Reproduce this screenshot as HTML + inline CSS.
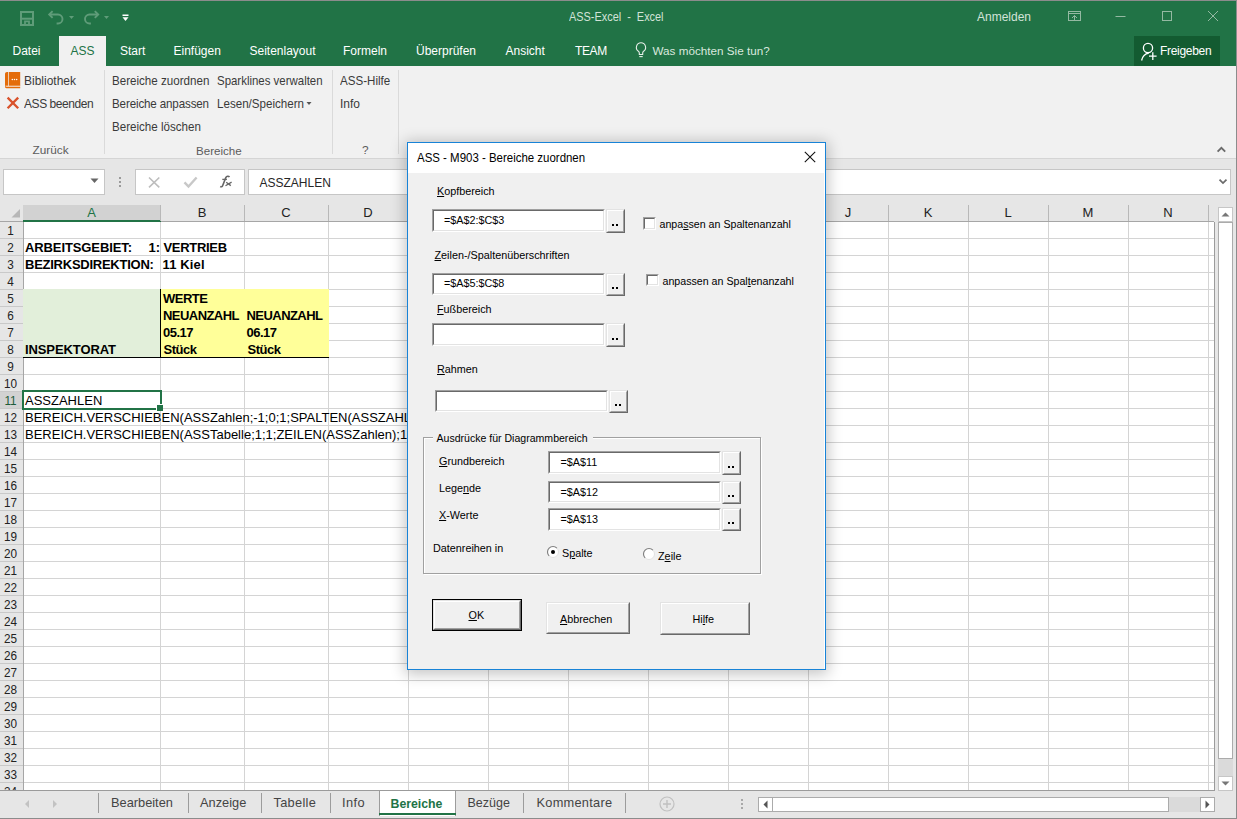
<!DOCTYPE html>
<html><head><meta charset="utf-8"><style>
html,body{margin:0;padding:0;}
body{width:1237px;height:819px;position:relative;overflow:hidden;font-family:"Liberation Sans", sans-serif;background:#e6e6e6}
body>div,body>svg{position:absolute}
.t{position:absolute;white-space:pre;line-height:1;font-family:"Liberation Sans", sans-serif}
u{text-decoration:underline;text-underline-offset:1px}
</style></head><body>
<div style="left:0px;top:0px;width:1237px;height:819px;background:#e6e6e6"></div>
<div style="left:0px;top:0px;width:1237px;height:66px;background:#217346"></div>
<div style="left:0px;top:0px;width:1237px;height:1px;background:#8c8c8c"></div>
<svg style="position:absolute;left:18px;top:9px;" width="20" height="18" viewBox="0 0 20 18"><path d="M3 3h12v13H3z" fill="none" stroke="#5f9c79" stroke-width="2"/><path d="M3 9.7h12" stroke="#5f9c79" stroke-width="2"/><path d="M7 16v-3.6h4V16" fill="none" stroke="#5f9c79" stroke-width="1.8"/></svg>
<svg style="position:absolute;left:47px;top:9px;" width="20" height="18" viewBox="0 0 20 18"><path d="M5.6 2.1L2.2 5.5l3.4 3.4" fill="none" stroke="#5f9c79" stroke-width="1.9"/><path d="M2.5 5.5h8.5a4.5 4.5 0 0 1 0 9H9.6" fill="none" stroke="#5f9c79" stroke-width="1.9"/></svg>
<svg style="position:absolute;left:68px;top:15px;" width="7" height="5" viewBox="0 0 7 5"><path d="M1 1h5l-2.5 3z" fill="#5f9c79"/></svg>
<svg style="position:absolute;left:82px;top:9px;" width="20" height="18" viewBox="0 0 20 18"><path d="M12.8 2.1l3.4 3.4-3.4 3.4" fill="none" stroke="#5f9c79" stroke-width="1.9"/><path d="M16 5.5H7.5a4.5 4.5 0 0 0 0 9h1.4" fill="none" stroke="#5f9c79" stroke-width="1.9"/></svg>
<svg style="position:absolute;left:103px;top:15px;" width="7" height="5" viewBox="0 0 7 5"><path d="M1 1h5l-2.5 3z" fill="#5f9c79"/></svg>
<svg style="position:absolute;left:121px;top:13px;" width="9" height="10" viewBox="0 0 9 10"><rect x="1.5" y="1.5" width="6" height="1.5" fill="#fff"/><path d="M1.5 4.3h6l-3 3.6z" fill="#fff"/></svg>
<div class="t" style="left:569.00px;top:10.50px;font-size:12.4px;color:#d3e3d8;font-weight:normal;;transform:scaleX(0.88);transform-origin:0 0">ASS-Excel&nbsp; -&nbsp; Excel</div>
<div class="t" style="left:977.00px;top:11.14px;font-size:12px;color:#d3e3d8;font-weight:normal;">Anmelden</div>
<svg style="position:absolute;left:1066px;top:9px;" width="18" height="14" viewBox="0 0 18 14"><rect x="2.5" y="2.5" width="12" height="9" fill="none" stroke="#94b9a2" stroke-width="1"/><path d="M2.5 4.5h12" stroke="#94b9a2"/><path d="M8.5 11.5v-5m-2.5 2.5l2.5-2.5 2.5 2.5" fill="none" stroke="#94b9a2"/></svg>
<svg style="position:absolute;left:1114px;top:9px;" width="14" height="14" viewBox="0 0 14 14"><path d="M1.5 7.5h10" stroke="#94b9a2"/></svg>
<svg style="position:absolute;left:1160px;top:9px;" width="14" height="14" viewBox="0 0 14 14"><rect x="2.5" y="2.5" width="9" height="9" fill="none" stroke="#94b9a2"/></svg>
<svg style="position:absolute;left:1206px;top:9px;" width="14" height="14" viewBox="0 0 14 14"><path d="M2 2l10 10m0-10L2 12" stroke="#94b9a2" stroke-width="1"/></svg>
<div style="left:59px;top:36px;width:47px;height:30px;background:#f1f1f1"></div>
<div class="t" style="left:12.50px;top:44.84px;font-size:12px;color:#fff;font-weight:normal;">Datei</div>
<div class="t" style="left:70.50px;top:44.84px;font-size:12px;color:#217346;font-weight:normal;">ASS</div>
<div class="t" style="left:120.00px;top:44.84px;font-size:12px;color:#fff;font-weight:normal;">Start</div>
<div class="t" style="left:173.50px;top:44.84px;font-size:12px;color:#fff;font-weight:normal;">Einfügen</div>
<div class="t" style="left:249.50px;top:44.84px;font-size:12px;color:#fff;font-weight:normal;">Seitenlayout</div>
<div class="t" style="left:343.00px;top:44.84px;font-size:12px;color:#fff;font-weight:normal;">Formeln</div>
<div class="t" style="left:416.00px;top:44.84px;font-size:12px;color:#fff;font-weight:normal;">Überprüfen</div>
<div class="t" style="left:505.50px;top:44.84px;font-size:12px;color:#fff;font-weight:normal;">Ansicht</div>
<div class="t" style="left:575.00px;top:44.84px;font-size:12px;color:#fff;font-weight:normal;letter-spacing:-0.4px">TEAM</div>
<svg style="position:absolute;left:634px;top:41px;" width="14" height="18" viewBox="0 0 14 18"><path d="M7 1.8a4.6 4.6 0 0 0-2.6 8.4c.6.5.9 1.2.9 1.9v1.4h3.4v-1.4c0-.7.3-1.4.9-1.9A4.6 4.6 0 0 0 7 1.8z" fill="none" stroke="#e8f0ea" stroke-width="1.1"/><path d="M5.3 15.6h3.4" stroke="#e8f0ea" stroke-width="1.1"/></svg>
<div class="t" style="left:652.50px;top:45.10px;font-size:11.7px;color:#d9e8de;font-weight:normal;">Was möchten Sie tun?</div>
<div style="left:1134px;top:36px;width:86px;height:30px;background:#135b31"></div>
<svg style="position:absolute;left:1138px;top:40px;" width="22" height="24" viewBox="0 0 22 24"><circle cx="10" cy="8" r="4.6" fill="none" stroke="#fff" stroke-width="1.3"/><path d="M3.6 20.5c.8-3.8 3.4-6.7 7.2-7.3" fill="none" stroke="#fff" stroke-width="1.3"/><path d="M14.8 12.3v7.6M11 16.1h7.6" stroke="#fff" stroke-width="1.3"/></svg>
<div class="t" style="left:1160.00px;top:44.54px;font-size:12px;color:#fff;font-weight:normal;letter-spacing:-0.3px">Freigeben</div>
<div style="left:1236px;top:0px;width:1px;height:819px;background:#8c8c8c"></div>
<div style="left:0px;top:66px;width:1236px;height:92px;background:#f1f1f1"></div>
<div style="left:0px;top:158px;width:1236px;height:1px;background:#d5d5d5"></div>
<div style="left:104px;top:70px;width:1px;height:84px;background:#dadada"></div>
<div style="left:332px;top:70px;width:1px;height:84px;background:#dadada"></div>
<div style="left:398px;top:70px;width:1px;height:84px;background:#dadada"></div>
<svg style="position:absolute;left:4px;top:71px;" width="18" height="19" viewBox="0 0 18 19"><path d="M1 3.2c0-1.3.8-2.2 2-2.2h1.2v14H1z" fill="#e46c0a"/><rect x="4.9" y="1" width="11.3" height="14" fill="#e46c0a"/><path d="M1 14.6v1.2c0 .9.6 1.4 1.4 1.4h13.8v-1.6H2.7" fill="#e46c0a"/><path d="M1.4 15.1h14.8" stroke="#fff" stroke-width=".6"/><circle cx="8.3" cy="8.6" r=".75" fill="#fff"/><circle cx="10.5" cy="8.6" r=".75" fill="#fff"/><circle cx="12.7" cy="8.6" r=".75" fill="#fff"/></svg>
<svg style="position:absolute;left:5px;top:95px;" width="16" height="16" viewBox="0 0 16 16"><path d="M2.6 2.6l10.6 10.6m0-10.6L2.6 13.2" stroke="#d9522b" stroke-width="2.3"/></svg>
<div class="t" style="left:23.50px;top:75.03px;font-size:12.6px;color:#3a3a3a;font-weight:normal;;transform:scaleX(0.9524);transform-origin:0 0">Bibliothek</div>
<div class="t" style="left:23.50px;top:98.23px;font-size:12.6px;color:#3a3a3a;font-weight:normal;letter-spacing:-0.45px;transform:scaleX(0.9524);transform-origin:0 0">ASS beenden</div>
<div class="t" style="left:112.00px;top:75.03px;font-size:12.6px;color:#3a3a3a;font-weight:normal;;transform:scaleX(0.9206);transform-origin:0 0">Bereiche zuordnen</div>
<div class="t" style="left:112.00px;top:98.23px;font-size:12.6px;color:#3a3a3a;font-weight:normal;letter-spacing:-0.15px;transform:scaleX(0.9206);transform-origin:0 0">Bereiche anpassen</div>
<div class="t" style="left:112.00px;top:121.23px;font-size:12.6px;color:#3a3a3a;font-weight:normal;;transform:scaleX(0.9206);transform-origin:0 0">Bereiche löschen</div>
<div class="t" style="left:217.00px;top:75.03px;font-size:12.6px;color:#3a3a3a;font-weight:normal;;transform:scaleX(0.9087);transform-origin:0 0">Sparklines verwalten</div>
<div class="t" style="left:217.00px;top:98.23px;font-size:12.6px;color:#3a3a3a;font-weight:normal;;transform:scaleX(0.9206);transform-origin:0 0">Lesen/Speichern</div>
<svg style="position:absolute;left:306px;top:101px;" width="6" height="5" viewBox="0 0 6 5"><path d="M.5 1h5l-2.5 3z" fill="#555"/></svg>
<div class="t" style="left:339.50px;top:75.03px;font-size:12.6px;color:#3a3a3a;font-weight:normal;;transform:scaleX(0.9206);transform-origin:0 0">ASS-Hilfe</div>
<div class="t" style="left:339.50px;top:98.23px;font-size:12.6px;color:#3a3a3a;font-weight:normal;;transform:scaleX(0.9524);transform-origin:0 0">Info</div>
<div class="t" style="left:32.50px;top:144.51px;font-size:11.8px;color:#5c5c5c;font-weight:normal;">Zurück</div>
<div class="t" style="left:196.00px;top:144.68px;font-size:11.6px;color:#5c5c5c;font-weight:normal;">Bereiche</div>
<div class="t" style="left:362.00px;top:144.51px;font-size:11.8px;color:#5c5c5c;font-weight:normal;">?</div>
<svg style="position:absolute;left:1214px;top:143px;" width="14" height="12" viewBox="0 0 14 12"><path d="M3.6 8.6l3.8-3.8 3.8 3.8" fill="none" stroke="#6b6b6b" stroke-width="1.9"/></svg>
<div style="left:3px;top:169px;width:102px;height:26px;background:#fff;border:1px solid #c6c6c6;box-sizing:border-box"></div>
<svg style="position:absolute;left:89px;top:177px;" width="11" height="7" viewBox="0 0 11 7"><path d="M1.5 1.5h8l-4 4.5z" fill="#666"/></svg>
<div style="left:119px;top:177px;width:2px;height:2px;background:#9a9a9a"></div>
<div style="left:119px;top:181px;width:2px;height:2px;background:#9a9a9a"></div>
<div style="left:119px;top:185px;width:2px;height:2px;background:#9a9a9a"></div>
<div style="left:135px;top:169px;width:110px;height:26px;background:#fff;border:1px solid #c6c6c6;box-sizing:border-box"></div>
<svg style="position:absolute;left:147px;top:176px;" width="14" height="12" viewBox="0 0 14 12"><path d="M2 1.5l10.3 9.8M12.3 1.5L2 11.3" stroke="#bdbdbd" stroke-width="1.6"/></svg>
<svg style="position:absolute;left:183px;top:176px;" width="15" height="13" viewBox="0 0 15 13"><path d="M1.5 6.3l4 4.2L13.6 1.5" fill="none" stroke="#c8c8c8" stroke-width="2.4"/></svg>
<svg style="position:absolute;left:218px;top:174px;" width="16" height="16" viewBox="0 0 16 16"><path d="M11.4 3.2C10.8 1.9 8.6 1.8 7.8 3.6L4.6 11.8C4.2 12.8 3.2 13.1 2.2 12.5" fill="none" stroke="#666" stroke-width="1.6"/><path d="M4.3 5.4h4.6" stroke="#666" stroke-width="1.3"/><path d="M8.2 8.3l4.6 3.3M13.6 8.1l-6.1 3.6" stroke="#666" stroke-width="1.3"/></svg>
<div style="left:248px;top:169px;width:983px;height:26px;background:#fff;border:1px solid #c6c6c6;box-sizing:border-box"></div>
<div class="t" style="left:259.50px;top:176.74px;font-size:12px;color:#262626;font-weight:normal;">ASSZAHLEN</div>
<svg style="position:absolute;left:1217px;top:176px;" width="12" height="10" viewBox="0 0 12 10"><path d="M2.5 3.6l3.5 3.5 3.5-3.5" fill="none" stroke="#6b6b6b" stroke-width="1.7"/></svg>
<div style="left:24px;top:222px;width:1190px;height:568px;background:#fff"></div>
<div style="left:0px;top:205px;width:1214px;height:17px;background:#e6e6e6"></div>
<svg style="position:absolute;left:6px;top:207px;" width="16" height="14" viewBox="0 0 16 14"><path d="M14 2v8.5H5.5z" fill="#b7b7b7"/></svg>
<div style="left:0px;top:222px;width:23px;height:568px;background:#e6e6e6"></div>
<div style="left:160px;top:222px;width:1px;height:568px;background:#d4d4d4"></div>
<div style="left:244px;top:222px;width:1px;height:568px;background:#d4d4d4"></div>
<div style="left:328px;top:222px;width:1px;height:568px;background:#d4d4d4"></div>
<div style="left:408px;top:222px;width:1px;height:568px;background:#d4d4d4"></div>
<div style="left:488px;top:222px;width:1px;height:568px;background:#d4d4d4"></div>
<div style="left:568px;top:222px;width:1px;height:568px;background:#d4d4d4"></div>
<div style="left:648px;top:222px;width:1px;height:568px;background:#d4d4d4"></div>
<div style="left:728px;top:222px;width:1px;height:568px;background:#d4d4d4"></div>
<div style="left:808px;top:222px;width:1px;height:568px;background:#d4d4d4"></div>
<div style="left:888px;top:222px;width:1px;height:568px;background:#d4d4d4"></div>
<div style="left:968px;top:222px;width:1px;height:568px;background:#d4d4d4"></div>
<div style="left:1048px;top:222px;width:1px;height:568px;background:#d4d4d4"></div>
<div style="left:1128px;top:222px;width:1px;height:568px;background:#d4d4d4"></div>
<div style="left:1208px;top:222px;width:1px;height:568px;background:#d4d4d4"></div>
<div style="left:23px;top:238px;width:1191px;height:1px;background:#d4d4d4"></div>
<div style="left:23px;top:255px;width:1191px;height:1px;background:#d4d4d4"></div>
<div style="left:23px;top:272px;width:1191px;height:1px;background:#d4d4d4"></div>
<div style="left:23px;top:289px;width:1191px;height:1px;background:#d4d4d4"></div>
<div style="left:23px;top:306px;width:1191px;height:1px;background:#d4d4d4"></div>
<div style="left:23px;top:323px;width:1191px;height:1px;background:#d4d4d4"></div>
<div style="left:23px;top:340px;width:1191px;height:1px;background:#d4d4d4"></div>
<div style="left:23px;top:357px;width:1191px;height:1px;background:#d4d4d4"></div>
<div style="left:23px;top:374px;width:1191px;height:1px;background:#d4d4d4"></div>
<div style="left:23px;top:391px;width:1191px;height:1px;background:#d4d4d4"></div>
<div style="left:23px;top:408px;width:1191px;height:1px;background:#d4d4d4"></div>
<div style="left:23px;top:425px;width:1191px;height:1px;background:#d4d4d4"></div>
<div style="left:23px;top:442px;width:1191px;height:1px;background:#d4d4d4"></div>
<div style="left:23px;top:459px;width:1191px;height:1px;background:#d4d4d4"></div>
<div style="left:23px;top:476px;width:1191px;height:1px;background:#d4d4d4"></div>
<div style="left:23px;top:493px;width:1191px;height:1px;background:#d4d4d4"></div>
<div style="left:23px;top:510px;width:1191px;height:1px;background:#d4d4d4"></div>
<div style="left:23px;top:527px;width:1191px;height:1px;background:#d4d4d4"></div>
<div style="left:23px;top:544px;width:1191px;height:1px;background:#d4d4d4"></div>
<div style="left:23px;top:561px;width:1191px;height:1px;background:#d4d4d4"></div>
<div style="left:23px;top:578px;width:1191px;height:1px;background:#d4d4d4"></div>
<div style="left:23px;top:595px;width:1191px;height:1px;background:#d4d4d4"></div>
<div style="left:23px;top:612px;width:1191px;height:1px;background:#d4d4d4"></div>
<div style="left:23px;top:629px;width:1191px;height:1px;background:#d4d4d4"></div>
<div style="left:23px;top:646px;width:1191px;height:1px;background:#d4d4d4"></div>
<div style="left:23px;top:663px;width:1191px;height:1px;background:#d4d4d4"></div>
<div style="left:23px;top:680px;width:1191px;height:1px;background:#d4d4d4"></div>
<div style="left:23px;top:697px;width:1191px;height:1px;background:#d4d4d4"></div>
<div style="left:23px;top:714px;width:1191px;height:1px;background:#d4d4d4"></div>
<div style="left:23px;top:731px;width:1191px;height:1px;background:#d4d4d4"></div>
<div style="left:23px;top:748px;width:1191px;height:1px;background:#d4d4d4"></div>
<div style="left:23px;top:765px;width:1191px;height:1px;background:#d4d4d4"></div>
<div style="left:23px;top:782px;width:1191px;height:1px;background:#d4d4d4"></div>
<div style="left:0px;top:238px;width:23px;height:1px;background:#c9c9c9"></div>
<div style="left:0px;top:255px;width:23px;height:1px;background:#c9c9c9"></div>
<div style="left:0px;top:272px;width:23px;height:1px;background:#c9c9c9"></div>
<div style="left:0px;top:289px;width:23px;height:1px;background:#c9c9c9"></div>
<div style="left:0px;top:306px;width:23px;height:1px;background:#c9c9c9"></div>
<div style="left:0px;top:323px;width:23px;height:1px;background:#c9c9c9"></div>
<div style="left:0px;top:340px;width:23px;height:1px;background:#c9c9c9"></div>
<div style="left:0px;top:357px;width:23px;height:1px;background:#c9c9c9"></div>
<div style="left:0px;top:374px;width:23px;height:1px;background:#c9c9c9"></div>
<div style="left:0px;top:391px;width:23px;height:1px;background:#c9c9c9"></div>
<div style="left:0px;top:408px;width:23px;height:1px;background:#c9c9c9"></div>
<div style="left:0px;top:425px;width:23px;height:1px;background:#c9c9c9"></div>
<div style="left:0px;top:442px;width:23px;height:1px;background:#c9c9c9"></div>
<div style="left:0px;top:459px;width:23px;height:1px;background:#c9c9c9"></div>
<div style="left:0px;top:476px;width:23px;height:1px;background:#c9c9c9"></div>
<div style="left:0px;top:493px;width:23px;height:1px;background:#c9c9c9"></div>
<div style="left:0px;top:510px;width:23px;height:1px;background:#c9c9c9"></div>
<div style="left:0px;top:527px;width:23px;height:1px;background:#c9c9c9"></div>
<div style="left:0px;top:544px;width:23px;height:1px;background:#c9c9c9"></div>
<div style="left:0px;top:561px;width:23px;height:1px;background:#c9c9c9"></div>
<div style="left:0px;top:578px;width:23px;height:1px;background:#c9c9c9"></div>
<div style="left:0px;top:595px;width:23px;height:1px;background:#c9c9c9"></div>
<div style="left:0px;top:612px;width:23px;height:1px;background:#c9c9c9"></div>
<div style="left:0px;top:629px;width:23px;height:1px;background:#c9c9c9"></div>
<div style="left:0px;top:646px;width:23px;height:1px;background:#c9c9c9"></div>
<div style="left:0px;top:663px;width:23px;height:1px;background:#c9c9c9"></div>
<div style="left:0px;top:680px;width:23px;height:1px;background:#c9c9c9"></div>
<div style="left:0px;top:697px;width:23px;height:1px;background:#c9c9c9"></div>
<div style="left:0px;top:714px;width:23px;height:1px;background:#c9c9c9"></div>
<div style="left:0px;top:731px;width:23px;height:1px;background:#c9c9c9"></div>
<div style="left:0px;top:748px;width:23px;height:1px;background:#c9c9c9"></div>
<div style="left:0px;top:765px;width:23px;height:1px;background:#c9c9c9"></div>
<div style="left:0px;top:782px;width:23px;height:1px;background:#c9c9c9"></div>
<div style="left:23px;top:222px;width:1px;height:568px;background:#a6a6a6"></div>
<div style="left:0px;top:221px;width:1214px;height:1px;background:#a6a6a6"></div>
<div style="left:23px;top:205px;width:137px;height:15px;background:#d2d2d2"></div>
<div style="left:23px;top:220px;width:138px;height:2px;background:#217346"></div>
<div style="left:160px;top:205px;width:1px;height:16px;background:#b8b8b8"></div>
<div class="t" style="left:23px;width:137px;text-align:center;top:205.4px;font-size:13px;line-height:16px;color:#217346">A</div>
<div style="left:244px;top:205px;width:1px;height:16px;background:#b8b8b8"></div>
<div class="t" style="left:160px;width:84px;text-align:center;top:205.4px;font-size:13px;line-height:16px;color:#222">B</div>
<div style="left:328px;top:205px;width:1px;height:16px;background:#b8b8b8"></div>
<div class="t" style="left:244px;width:84px;text-align:center;top:205.4px;font-size:13px;line-height:16px;color:#222">C</div>
<div style="left:408px;top:205px;width:1px;height:16px;background:#b8b8b8"></div>
<div class="t" style="left:328px;width:80px;text-align:center;top:205.4px;font-size:13px;line-height:16px;color:#222">D</div>
<div style="left:488px;top:205px;width:1px;height:16px;background:#b8b8b8"></div>
<div class="t" style="left:408px;width:80px;text-align:center;top:205.4px;font-size:13px;line-height:16px;color:#222">E</div>
<div style="left:568px;top:205px;width:1px;height:16px;background:#b8b8b8"></div>
<div class="t" style="left:488px;width:80px;text-align:center;top:205.4px;font-size:13px;line-height:16px;color:#222">F</div>
<div style="left:648px;top:205px;width:1px;height:16px;background:#b8b8b8"></div>
<div class="t" style="left:568px;width:80px;text-align:center;top:205.4px;font-size:13px;line-height:16px;color:#222">G</div>
<div style="left:728px;top:205px;width:1px;height:16px;background:#b8b8b8"></div>
<div class="t" style="left:648px;width:80px;text-align:center;top:205.4px;font-size:13px;line-height:16px;color:#222">H</div>
<div style="left:808px;top:205px;width:1px;height:16px;background:#b8b8b8"></div>
<div class="t" style="left:728px;width:80px;text-align:center;top:205.4px;font-size:13px;line-height:16px;color:#222">I</div>
<div style="left:888px;top:205px;width:1px;height:16px;background:#b8b8b8"></div>
<div class="t" style="left:808px;width:80px;text-align:center;top:205.4px;font-size:13px;line-height:16px;color:#222">J</div>
<div style="left:968px;top:205px;width:1px;height:16px;background:#b8b8b8"></div>
<div class="t" style="left:888px;width:80px;text-align:center;top:205.4px;font-size:13px;line-height:16px;color:#222">K</div>
<div style="left:1048px;top:205px;width:1px;height:16px;background:#b8b8b8"></div>
<div class="t" style="left:968px;width:80px;text-align:center;top:205.4px;font-size:13px;line-height:16px;color:#222">L</div>
<div style="left:1128px;top:205px;width:1px;height:16px;background:#b8b8b8"></div>
<div class="t" style="left:1048px;width:80px;text-align:center;top:205.4px;font-size:13px;line-height:16px;color:#222">M</div>
<div style="left:1208px;top:205px;width:1px;height:16px;background:#b8b8b8"></div>
<div class="t" style="left:1128px;width:80px;text-align:center;top:205.4px;font-size:13px;line-height:16px;color:#222">N</div>
<div class="t" style="left:0px;width:21px;text-align:center;top:222.8px;font-size:13.5px;line-height:16px;color:#222;transform:scaleX(0.87)">1</div>
<div class="t" style="left:0px;width:21px;text-align:center;top:239.8px;font-size:13.5px;line-height:16px;color:#222;transform:scaleX(0.87)">2</div>
<div class="t" style="left:0px;width:21px;text-align:center;top:256.8px;font-size:13.5px;line-height:16px;color:#222;transform:scaleX(0.87)">3</div>
<div class="t" style="left:0px;width:21px;text-align:center;top:273.8px;font-size:13.5px;line-height:16px;color:#222;transform:scaleX(0.87)">4</div>
<div class="t" style="left:0px;width:21px;text-align:center;top:290.8px;font-size:13.5px;line-height:16px;color:#222;transform:scaleX(0.87)">5</div>
<div class="t" style="left:0px;width:21px;text-align:center;top:307.8px;font-size:13.5px;line-height:16px;color:#222;transform:scaleX(0.87)">6</div>
<div class="t" style="left:0px;width:21px;text-align:center;top:324.8px;font-size:13.5px;line-height:16px;color:#222;transform:scaleX(0.87)">7</div>
<div class="t" style="left:0px;width:21px;text-align:center;top:341.8px;font-size:13.5px;line-height:16px;color:#222;transform:scaleX(0.87)">8</div>
<div class="t" style="left:0px;width:21px;text-align:center;top:358.8px;font-size:13.5px;line-height:16px;color:#222;transform:scaleX(0.87)">9</div>
<div class="t" style="left:0px;width:21px;text-align:center;top:375.8px;font-size:13.5px;line-height:16px;color:#222;transform:scaleX(0.87)">10</div>
<div style="left:0px;top:392px;width:23px;height:16px;background:#d2d2d2"></div>
<div class="t" style="left:0px;width:21px;text-align:center;top:392.8px;font-size:13.5px;line-height:16px;color:#1d5c38;transform:scaleX(0.87)">11</div>
<div class="t" style="left:0px;width:21px;text-align:center;top:409.8px;font-size:13.5px;line-height:16px;color:#222;transform:scaleX(0.87)">12</div>
<div class="t" style="left:0px;width:21px;text-align:center;top:426.8px;font-size:13.5px;line-height:16px;color:#222;transform:scaleX(0.87)">13</div>
<div class="t" style="left:0px;width:21px;text-align:center;top:443.8px;font-size:13.5px;line-height:16px;color:#222;transform:scaleX(0.87)">14</div>
<div class="t" style="left:0px;width:21px;text-align:center;top:460.8px;font-size:13.5px;line-height:16px;color:#222;transform:scaleX(0.87)">15</div>
<div class="t" style="left:0px;width:21px;text-align:center;top:477.8px;font-size:13.5px;line-height:16px;color:#222;transform:scaleX(0.87)">16</div>
<div class="t" style="left:0px;width:21px;text-align:center;top:494.8px;font-size:13.5px;line-height:16px;color:#222;transform:scaleX(0.87)">17</div>
<div class="t" style="left:0px;width:21px;text-align:center;top:511.8px;font-size:13.5px;line-height:16px;color:#222;transform:scaleX(0.87)">18</div>
<div class="t" style="left:0px;width:21px;text-align:center;top:528.8px;font-size:13.5px;line-height:16px;color:#222;transform:scaleX(0.87)">19</div>
<div class="t" style="left:0px;width:21px;text-align:center;top:545.8px;font-size:13.5px;line-height:16px;color:#222;transform:scaleX(0.87)">20</div>
<div class="t" style="left:0px;width:21px;text-align:center;top:562.8px;font-size:13.5px;line-height:16px;color:#222;transform:scaleX(0.87)">21</div>
<div class="t" style="left:0px;width:21px;text-align:center;top:579.8px;font-size:13.5px;line-height:16px;color:#222;transform:scaleX(0.87)">22</div>
<div class="t" style="left:0px;width:21px;text-align:center;top:596.8px;font-size:13.5px;line-height:16px;color:#222;transform:scaleX(0.87)">23</div>
<div class="t" style="left:0px;width:21px;text-align:center;top:613.8px;font-size:13.5px;line-height:16px;color:#222;transform:scaleX(0.87)">24</div>
<div class="t" style="left:0px;width:21px;text-align:center;top:630.8px;font-size:13.5px;line-height:16px;color:#222;transform:scaleX(0.87)">25</div>
<div class="t" style="left:0px;width:21px;text-align:center;top:647.8px;font-size:13.5px;line-height:16px;color:#222;transform:scaleX(0.87)">26</div>
<div class="t" style="left:0px;width:21px;text-align:center;top:664.8px;font-size:13.5px;line-height:16px;color:#222;transform:scaleX(0.87)">27</div>
<div class="t" style="left:0px;width:21px;text-align:center;top:681.8px;font-size:13.5px;line-height:16px;color:#222;transform:scaleX(0.87)">28</div>
<div class="t" style="left:0px;width:21px;text-align:center;top:698.8px;font-size:13.5px;line-height:16px;color:#222;transform:scaleX(0.87)">29</div>
<div class="t" style="left:0px;width:21px;text-align:center;top:715.8px;font-size:13.5px;line-height:16px;color:#222;transform:scaleX(0.87)">30</div>
<div class="t" style="left:0px;width:21px;text-align:center;top:732.8px;font-size:13.5px;line-height:16px;color:#222;transform:scaleX(0.87)">31</div>
<div class="t" style="left:0px;width:21px;text-align:center;top:749.8px;font-size:13.5px;line-height:16px;color:#222;transform:scaleX(0.87)">32</div>
<div class="t" style="left:0px;width:21px;text-align:center;top:766.8px;font-size:13.5px;line-height:16px;color:#222;transform:scaleX(0.87)">33</div>
<div class="t" style="left:0px;width:21px;text-align:center;top:783.8px;font-size:13.5px;line-height:16px;color:#222;transform:scaleX(0.87)">34</div>
<div style="left:23px;top:289px;width:138px;height:68px;background:#e2efda"></div>
<div style="left:161px;top:289px;width:168px;height:68px;background:#ffff99"></div>
<div style="left:160px;top:289px;width:1px;height:68px;background:#000"></div>
<div style="left:23px;top:357px;width:306px;height:1px;background:#000"></div>
<div class="t" style="left:25.00px;top:241.40px;font-size:13px;color:#000;font-weight:bold;;letter-spacing:-0.1px">ARBEITSGEBIET:</div>
<div class="t" style="left:148.50px;top:241.40px;font-size:13px;color:#000;font-weight:bold;;letter-spacing:0px">1:</div>
<div class="t" style="left:163.50px;top:241.40px;font-size:13px;color:#000;font-weight:bold;;letter-spacing:-0.3px">VERTRIEB</div>
<div class="t" style="left:25.00px;top:258.40px;font-size:13px;color:#000;font-weight:bold;;letter-spacing:-0.25px">BEZIRKSDIREKTION:</div>
<div class="t" style="left:162.50px;top:258.40px;font-size:13px;color:#000;font-weight:bold;;letter-spacing:0.15px">11 Kiel</div>
<div class="t" style="left:163.00px;top:292.40px;font-size:13px;color:#000;font-weight:bold;;letter-spacing:-0.5px">WERTE</div>
<div class="t" style="left:163.00px;top:309.40px;font-size:13px;color:#000;font-weight:bold;;letter-spacing:-0.55px">NEUANZAHL</div>
<div class="t" style="left:246.50px;top:309.40px;font-size:13px;color:#000;font-weight:bold;;letter-spacing:-0.55px">NEUANZAHL</div>
<div class="t" style="left:163.00px;top:326.40px;font-size:13px;color:#000;font-weight:bold;;letter-spacing:-0.5px">05.17</div>
<div class="t" style="left:246.50px;top:326.40px;font-size:13px;color:#000;font-weight:bold;;letter-spacing:-0.5px">06.17</div>
<div class="t" style="left:163.50px;top:343.40px;font-size:13px;color:#000;font-weight:bold;;letter-spacing:-0.5px">Stück</div>
<div class="t" style="left:247.50px;top:343.40px;font-size:13px;color:#000;font-weight:bold;;letter-spacing:-0.5px">Stück</div>
<div class="t" style="left:25.00px;top:343.40px;font-size:13px;color:#000;font-weight:bold;;letter-spacing:-0.1px">INSPEKTORAT</div>
<div class="t" style="left:25.00px;top:394.40px;font-size:13px;color:#000;font-weight:normal;;letter-spacing:0px">ASSZAHLEN</div>
<div class="t" style="left:25.00px;top:411.40px;font-size:13px;color:#000;font-weight:normal;;letter-spacing:0px">BEREICH.VERSCHIEBEN(ASSZahlen;-1;0;1;SPALTEN(ASSZAHLEN)-1)</div>
<div class="t" style="left:25.00px;top:428.40px;font-size:13px;color:#000;font-weight:normal;;letter-spacing:0px">BEREICH.VERSCHIEBEN(ASSTabelle;1;1;ZEILEN(ASSZahlen);1)</div>
<div style="left:22px;top:390px;width:140px;height:20px;border:2px solid #217346;box-sizing:border-box"></div>
<div style="left:156px;top:404px;width:7px;height:7px;background:#fff"></div>
<div style="left:157px;top:405px;width:6px;height:6px;background:#217346"></div>
<div style="left:1214px;top:205px;width:22px;height:585px;background:#e6e6e6"></div>
<div style="left:1214px;top:222px;width:1px;height:568px;background:#9b9b9b"></div>
<div style="left:0px;top:790px;width:1215px;height:1px;background:#9b9b9b"></div>
<div style="left:1218px;top:207px;width:15px;height:583px;background:#dadada"></div>
<div style="left:1218px;top:207px;width:15px;height:15px;background:#fff;border:1px solid #c6c6c6;box-sizing:border-box"></div>
<svg style="position:absolute;left:1218px;top:207px;" width="15" height="15" viewBox="0 0 15 15"><path d="M3.5 9.5h8l-4-4z" fill="#777"/></svg>
<div style="left:1218px;top:222px;width:15px;height:537px;background:#fff;border:1px solid #ababab;box-sizing:border-box"></div>
<div style="left:1218px;top:776px;width:15px;height:15px;background:#fff;border:1px solid #c6c6c6;box-sizing:border-box"></div>
<svg style="position:absolute;left:1218px;top:776px;" width="15" height="15" viewBox="0 0 15 15"><path d="M3.5 5.5h8l-4 4z" fill="#777"/></svg>
<div style="left:0px;top:791px;width:1236px;height:27px;background:#e6e6e6"></div>
<div style="left:0px;top:818px;width:1237px;height:1px;background:#8c8c8c"></div>
<svg style="position:absolute;left:22px;top:797px;" width="10" height="14" viewBox="0 0 10 14"><path d="M7 3l-4 4 4 4z" fill="#c2c2c2"/></svg>
<svg style="position:absolute;left:50px;top:797px;" width="10" height="14" viewBox="0 0 10 14"><path d="M3 3l4 4-4 4z" fill="#c2c2c2"/></svg>
<div style="left:98px;top:793px;width:1px;height:20px;background:#9c9c9c"></div>
<div style="left:188px;top:793px;width:1px;height:20px;background:#9c9c9c"></div>
<div style="left:261px;top:793px;width:1px;height:20px;background:#9c9c9c"></div>
<div style="left:330px;top:793px;width:1px;height:20px;background:#9c9c9c"></div>
<div style="left:523px;top:793px;width:1px;height:20px;background:#9c9c9c"></div>
<div style="left:625px;top:793px;width:1px;height:20px;background:#9c9c9c"></div>
<div class="t" style="left:111.00px;top:797.16px;font-size:12.8px;color:#444;font-weight:normal;">Bearbeiten</div>
<div class="t" style="left:200.00px;top:797.16px;font-size:12.8px;color:#444;font-weight:normal;">Anzeige</div>
<div class="t" style="left:273.50px;top:797.16px;font-size:12.8px;color:#444;font-weight:normal;letter-spacing:0.3px">Tabelle</div>
<div class="t" style="left:342.00px;top:797.16px;font-size:12.8px;color:#444;font-weight:normal;letter-spacing:0.4px">Info</div>
<div style="left:379px;top:791px;width:77px;height:25px;background:#fff;border-left:1px solid #9c9c9c;border-right:1px solid #9c9c9c;box-sizing:border-box"></div>
<div style="left:379px;top:813px;width:77px;height:2px;background:#217346"></div>
<div class="t" style="left:390.50px;top:797.59px;font-size:12.3px;color:#217346;font-weight:bold;">Bereiche</div>
<div class="t" style="left:467.50px;top:797.42px;font-size:12.5px;color:#444;font-weight:normal;">Bezüge</div>
<div class="t" style="left:536.50px;top:797.16px;font-size:12.8px;color:#444;font-weight:normal;letter-spacing:0.25px">Kommentare</div>
<svg style="position:absolute;left:658px;top:795px;" width="18" height="18" viewBox="0 0 18 18"><circle cx="9" cy="9" r="7" fill="none" stroke="#c0c0c0" stroke-width="1.2"/><path d="M9 5v8M5 9h8" stroke="#c0c0c0" stroke-width="1.4"/></svg>
<div style="left:741px;top:799px;width:2px;height:2px;background:#a8a8a8"></div>
<div style="left:741px;top:803px;width:2px;height:2px;background:#a8a8a8"></div>
<div style="left:741px;top:807px;width:2px;height:2px;background:#a8a8a8"></div>
<div style="left:758px;top:797px;width:457px;height:15px;background:#dadada"></div>
<div style="left:758px;top:797px;width:15px;height:15px;background:#fff;border:1px solid #ababab;box-sizing:border-box"></div>
<svg style="position:absolute;left:758px;top:797px;" width="15" height="15" viewBox="0 0 15 15"><path d="M9.5 3.5v8l-4-4z" fill="#555"/></svg>
<div style="left:772px;top:797px;width:397px;height:15px;background:#fff;border:1px solid #ababab;box-sizing:border-box"></div>
<div style="left:1200px;top:797px;width:15px;height:15px;background:#fff;border:1px solid #ababab;box-sizing:border-box"></div>
<svg style="position:absolute;left:1200px;top:797px;" width="15" height="15" viewBox="0 0 15 15"><path d="M5.5 3.5v8l4-4z" fill="#555"/></svg>
<div style="left:407px;top:142px;width:419px;height:528px;box-shadow:0 2px 14px 2px rgba(0,0,0,0.24);background:#fff;border:1px solid #1883d7;box-sizing:border-box"></div>
<div style="left:408px;top:173px;width:416px;height:496px;background:#f0f0f0"></div>
<div class="t" style="left:416.50px;top:151.67px;font-size:12.2px;color:#000;font-weight:normal;;transform:scaleX(0.94);transform-origin:0 0">ASS - M903 - Bereiche zuordnen</div>
<svg style="position:absolute;left:803px;top:150px;" width="14" height="14" viewBox="0 0 14 14"><path d="M1.8 1.8l10.4 10.4m0-10.4L1.8 12.2" stroke="#111" stroke-width="1.1"/></svg>
<div class="t" style="left:437.00px;top:186.46px;font-size:10.8px;color:#000;font-weight:normal;"><u>K</u>opfbereich</div>
<div style="left:432px;top:209px;width:173px;height:23px;background:#fff;box-sizing:border-box;border-top:1px solid #a0a0a0;border-left:1px solid #a0a0a0;border-bottom:1px solid #fff;border-right:1px solid #fff"><div style="position:absolute;left:0;top:0;right:0;bottom:0;border-top:1px solid #696969;border-left:1px solid #696969;border-bottom:1px solid #e3e3e3;border-right:1px solid #e3e3e3"></div></div>
<div style="left:606px;top:209px;width:19px;height:24px;background:#f0f0f0;box-sizing:border-box;border-top:1px solid #e3e3e3;border-left:1px solid #e3e3e3;border-bottom:1px solid #696969;border-right:1px solid #696969"><div style="position:absolute;left:0;top:0;right:0;bottom:0;border-top:1px solid #fff;border-left:1px solid #fff;border-bottom:1px solid #a0a0a0;border-right:1px solid #a0a0a0"></div></div>
<div style="left:612px;top:224px;width:2px;height:2px;background:#000"></div>
<div style="left:616px;top:224px;width:2px;height:2px;background:#000"></div>
<div class="t" style="left:444.00px;top:214.66px;font-size:10.8px;color:#000;font-weight:normal;">=$A$2:$C$3</div>
<div style="left:643px;top:217px;width:13px;height:13px;background:#fff;box-sizing:border-box;border-top:1px solid #a0a0a0;border-left:1px solid #a0a0a0;border-bottom:1px solid #fff;border-right:1px solid #fff"><div style="position:absolute;left:0;top:0;right:0;bottom:0;border-top:1px solid #696969;border-left:1px solid #696969;border-bottom:1px solid #e3e3e3;border-right:1px solid #e3e3e3"></div></div>
<div class="t" style="left:659.50px;top:218.98px;font-size:10.65px;color:#000;font-weight:normal;">anpa<u>s</u>sen an Spaltenanzahl</div>
<div class="t" style="left:434.50px;top:249.76px;font-size:10.8px;color:#000;font-weight:normal;"><u>Z</u>eilen-/Spaltenüberschriften</div>
<div style="left:432px;top:273px;width:173px;height:22px;background:#fff;box-sizing:border-box;border-top:1px solid #a0a0a0;border-left:1px solid #a0a0a0;border-bottom:1px solid #fff;border-right:1px solid #fff"><div style="position:absolute;left:0;top:0;right:0;bottom:0;border-top:1px solid #696969;border-left:1px solid #696969;border-bottom:1px solid #e3e3e3;border-right:1px solid #e3e3e3"></div></div>
<div style="left:606px;top:273px;width:19px;height:23px;background:#f0f0f0;box-sizing:border-box;border-top:1px solid #e3e3e3;border-left:1px solid #e3e3e3;border-bottom:1px solid #696969;border-right:1px solid #696969"><div style="position:absolute;left:0;top:0;right:0;bottom:0;border-top:1px solid #fff;border-left:1px solid #fff;border-bottom:1px solid #a0a0a0;border-right:1px solid #a0a0a0"></div></div>
<div style="left:612px;top:287px;width:2px;height:2px;background:#000"></div>
<div style="left:616px;top:287px;width:2px;height:2px;background:#000"></div>
<div class="t" style="left:444.00px;top:278.36px;font-size:10.8px;color:#000;font-weight:normal;">=$A$5:$C$8</div>
<div style="left:646px;top:274px;width:13px;height:12px;background:#fff;box-sizing:border-box;border-top:1px solid #a0a0a0;border-left:1px solid #a0a0a0;border-bottom:1px solid #fff;border-right:1px solid #fff"><div style="position:absolute;left:0;top:0;right:0;bottom:0;border-top:1px solid #696969;border-left:1px solid #696969;border-bottom:1px solid #e3e3e3;border-right:1px solid #e3e3e3"></div></div>
<div class="t" style="left:662.50px;top:275.78px;font-size:10.65px;color:#000;font-weight:normal;">anpassen an Spal<u>t</u>enanzahl</div>
<div class="t" style="left:437.00px;top:303.66px;font-size:10.8px;color:#000;font-weight:normal;"><u>F</u>ußbereich</div>
<div style="left:432px;top:323px;width:173px;height:23px;background:#fff;box-sizing:border-box;border-top:1px solid #a0a0a0;border-left:1px solid #a0a0a0;border-bottom:1px solid #fff;border-right:1px solid #fff"><div style="position:absolute;left:0;top:0;right:0;bottom:0;border-top:1px solid #696969;border-left:1px solid #696969;border-bottom:1px solid #e3e3e3;border-right:1px solid #e3e3e3"></div></div>
<div style="left:606px;top:323px;width:19px;height:24px;background:#f0f0f0;box-sizing:border-box;border-top:1px solid #e3e3e3;border-left:1px solid #e3e3e3;border-bottom:1px solid #696969;border-right:1px solid #696969"><div style="position:absolute;left:0;top:0;right:0;bottom:0;border-top:1px solid #fff;border-left:1px solid #fff;border-bottom:1px solid #a0a0a0;border-right:1px solid #a0a0a0"></div></div>
<div style="left:612px;top:338px;width:2px;height:2px;background:#000"></div>
<div style="left:616px;top:338px;width:2px;height:2px;background:#000"></div>
<div class="t" style="left:437.00px;top:363.86px;font-size:10.8px;color:#000;font-weight:normal;"><u>R</u>ahmen</div>
<div style="left:435px;top:390px;width:173px;height:22px;background:#fff;box-sizing:border-box;border-top:1px solid #a0a0a0;border-left:1px solid #a0a0a0;border-bottom:1px solid #fff;border-right:1px solid #fff"><div style="position:absolute;left:0;top:0;right:0;bottom:0;border-top:1px solid #696969;border-left:1px solid #696969;border-bottom:1px solid #e3e3e3;border-right:1px solid #e3e3e3"></div></div>
<div style="left:609px;top:390px;width:19px;height:23px;background:#f0f0f0;box-sizing:border-box;border-top:1px solid #e3e3e3;border-left:1px solid #e3e3e3;border-bottom:1px solid #696969;border-right:1px solid #696969"><div style="position:absolute;left:0;top:0;right:0;bottom:0;border-top:1px solid #fff;border-left:1px solid #fff;border-bottom:1px solid #a0a0a0;border-right:1px solid #a0a0a0"></div></div>
<div style="left:615px;top:404px;width:2px;height:2px;background:#000"></div>
<div style="left:619px;top:404px;width:2px;height:2px;background:#000"></div>
<div style="left:423px;top:437px;width:338px;height:137px;box-sizing:border-box;border:1px solid #a0a0a0;box-shadow:inset 1px 1px 0 #fff, 1px 1px 0 #fff"></div>
<div style="left:433px;top:432px;width:160px;height:10px;background:#f0f0f0"></div>
<div class="t" style="left:436.50px;top:433.07px;font-size:10.55px;color:#000;font-weight:normal;">Ausdrücke für Diagrammbereich</div>
<div class="t" style="left:439.00px;top:455.96px;font-size:10.8px;color:#000;font-weight:normal;"><u>G</u>rundbereich</div>
<div style="left:548px;top:451px;width:173px;height:23px;background:#fff;box-sizing:border-box;border-top:1px solid #a0a0a0;border-left:1px solid #a0a0a0;border-bottom:1px solid #fff;border-right:1px solid #fff"><div style="position:absolute;left:0;top:0;right:0;bottom:0;border-top:1px solid #696969;border-left:1px solid #696969;border-bottom:1px solid #e3e3e3;border-right:1px solid #e3e3e3"></div></div>
<div style="left:722px;top:451px;width:19px;height:24px;background:#f0f0f0;box-sizing:border-box;border-top:1px solid #e3e3e3;border-left:1px solid #e3e3e3;border-bottom:1px solid #696969;border-right:1px solid #696969"><div style="position:absolute;left:0;top:0;right:0;bottom:0;border-top:1px solid #fff;border-left:1px solid #fff;border-bottom:1px solid #a0a0a0;border-right:1px solid #a0a0a0"></div></div>
<div style="left:728px;top:466px;width:2px;height:2px;background:#000"></div>
<div style="left:732px;top:466px;width:2px;height:2px;background:#000"></div>
<div class="t" style="left:560.50px;top:456.86px;font-size:10.8px;color:#000;font-weight:normal;">=$A$11</div>
<div class="t" style="left:439.00px;top:483.06px;font-size:10.8px;color:#000;font-weight:normal;">Lege<u>n</u>de</div>
<div style="left:548px;top:481px;width:173px;height:22px;background:#fff;box-sizing:border-box;border-top:1px solid #a0a0a0;border-left:1px solid #a0a0a0;border-bottom:1px solid #fff;border-right:1px solid #fff"><div style="position:absolute;left:0;top:0;right:0;bottom:0;border-top:1px solid #696969;border-left:1px solid #696969;border-bottom:1px solid #e3e3e3;border-right:1px solid #e3e3e3"></div></div>
<div style="left:722px;top:481px;width:19px;height:23px;background:#f0f0f0;box-sizing:border-box;border-top:1px solid #e3e3e3;border-left:1px solid #e3e3e3;border-bottom:1px solid #696969;border-right:1px solid #696969"><div style="position:absolute;left:0;top:0;right:0;bottom:0;border-top:1px solid #fff;border-left:1px solid #fff;border-bottom:1px solid #a0a0a0;border-right:1px solid #a0a0a0"></div></div>
<div style="left:728px;top:495px;width:2px;height:2px;background:#000"></div>
<div style="left:732px;top:495px;width:2px;height:2px;background:#000"></div>
<div class="t" style="left:560.50px;top:486.86px;font-size:10.8px;color:#000;font-weight:normal;">=$A$12</div>
<div class="t" style="left:439.00px;top:509.86px;font-size:10.8px;color:#000;font-weight:normal;"><u>X</u>-Werte</div>
<div style="left:548px;top:508px;width:173px;height:23px;background:#fff;box-sizing:border-box;border-top:1px solid #a0a0a0;border-left:1px solid #a0a0a0;border-bottom:1px solid #fff;border-right:1px solid #fff"><div style="position:absolute;left:0;top:0;right:0;bottom:0;border-top:1px solid #696969;border-left:1px solid #696969;border-bottom:1px solid #e3e3e3;border-right:1px solid #e3e3e3"></div></div>
<div style="left:722px;top:508px;width:19px;height:23px;background:#f0f0f0;box-sizing:border-box;border-top:1px solid #e3e3e3;border-left:1px solid #e3e3e3;border-bottom:1px solid #696969;border-right:1px solid #696969"><div style="position:absolute;left:0;top:0;right:0;bottom:0;border-top:1px solid #fff;border-left:1px solid #fff;border-bottom:1px solid #a0a0a0;border-right:1px solid #a0a0a0"></div></div>
<div style="left:728px;top:522px;width:2px;height:2px;background:#000"></div>
<div style="left:732px;top:522px;width:2px;height:2px;background:#000"></div>
<div class="t" style="left:560.50px;top:513.86px;font-size:10.8px;color:#000;font-weight:normal;">=$A$13</div>
<div class="t" style="left:433.00px;top:542.66px;font-size:10.8px;color:#000;font-weight:normal;">Datenreihen in</div>
<svg style="position:absolute;left:546px;top:545px;" width="14" height="14" viewBox="0 0 14 14"><circle cx="7" cy="7" r="5.5" fill="#fff" stroke="#e3e3e3"/><path d="M3.1 10.9A5.5 5.5 0 0 1 10.9 3.1" fill="none" stroke="#808080" stroke-width="1.1"/><circle cx="7" cy="7" r="2" fill="#000"/></svg>
<div class="t" style="left:562.00px;top:548.06px;font-size:10.8px;color:#000;font-weight:normal;">S<u>p</u>alte</div>
<svg style="position:absolute;left:642px;top:547px;" width="14" height="14" viewBox="0 0 14 14"><circle cx="7" cy="7" r="5.5" fill="#fff" stroke="#e3e3e3"/><path d="M3.1 10.9A5.5 5.5 0 0 1 10.9 3.1" fill="none" stroke="#808080" stroke-width="1.1"/></svg>
<div class="t" style="left:658.00px;top:550.56px;font-size:10.8px;color:#000;font-weight:normal;">Z<u>e</u>ile</div>
<div style="left:432px;top:599px;width:90px;height:32px;border:1px solid #000;box-sizing:border-box"></div>
<div style="left:433px;top:600px;width:88px;height:30px;background:#f0f0f0;box-sizing:border-box;border-top:1px solid #e3e3e3;border-left:1px solid #e3e3e3;border-bottom:1px solid #696969;border-right:1px solid #696969"><div style="position:absolute;left:0;top:0;right:0;bottom:0;border-top:1px solid #fff;border-left:1px solid #fff;border-bottom:1px solid #a0a0a0;border-right:1px solid #a0a0a0"></div></div>
<div class="t" style="left:468.50px;top:610.26px;font-size:10.8px;color:#000;font-weight:normal;"><u>O</u>K</div>
<div style="left:546px;top:602px;width:84px;height:32px;background:#f0f0f0;box-sizing:border-box;border-top:1px solid #e3e3e3;border-left:1px solid #e3e3e3;border-bottom:1px solid #696969;border-right:1px solid #696969"><div style="position:absolute;left:0;top:0;right:0;bottom:0;border-top:1px solid #fff;border-left:1px solid #fff;border-bottom:1px solid #a0a0a0;border-right:1px solid #a0a0a0"></div></div>
<div class="t" style="left:560.00px;top:613.56px;font-size:10.8px;color:#000;font-weight:normal;"><u>A</u>bbrechen</div>
<div style="left:660px;top:602px;width:90px;height:33px;background:#f0f0f0;box-sizing:border-box;border-top:1px solid #e3e3e3;border-left:1px solid #e3e3e3;border-bottom:1px solid #696969;border-right:1px solid #696969"><div style="position:absolute;left:0;top:0;right:0;bottom:0;border-top:1px solid #fff;border-left:1px solid #fff;border-bottom:1px solid #a0a0a0;border-right:1px solid #a0a0a0"></div></div>
<div class="t" style="left:692.50px;top:614.36px;font-size:10.8px;color:#000;font-weight:normal;">Hi<u>l</u>fe</div>
</body></html>
